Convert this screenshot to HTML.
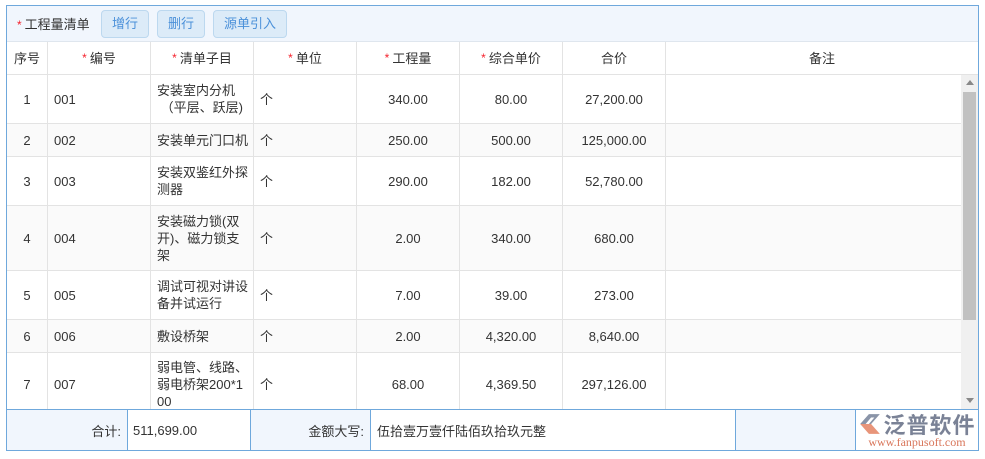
<!DOCTYPE html>
<html><head><meta charset="utf-8"><style>
*{box-sizing:border-box;margin:0;padding:0}
body{width:985px;height:459px;background:#fff;font-family:"Liberation Sans","Noto Sans CJK SC",sans-serif;font-size:13px;color:#333;position:relative;overflow:hidden}
.a{position:absolute}
.st{color:#f5222d;font-size:12px;margin-right:3px}
.btn{position:absolute;top:10px;height:28px;border:1px solid #bcd8ef;background:#dcebf8;border-radius:4px;color:#4a90d9;font-size:13px;line-height:26px;text-align:center}
.c{position:absolute;display:flex;align-items:center;border-right:1px solid #e3e3e3;border-bottom:1px solid #e3e3e3;line-height:17px;overflow:hidden}
.ctr{justify-content:center;text-align:center}
.lft{padding-left:6px}
.f{position:absolute;top:410px;height:40px;border-right:1px solid #6fa8dc;display:flex;align-items:center}
</style></head><body>
<div class="a" style="left:6px;top:5px;width:973px;height:446px;border:1px solid #6fa8dc"></div>
<div class="a" style="left:7px;top:6px;width:971px;height:36px;background:#f1f6fd;border-bottom:1px solid #dfe6ee"></div>
<div class="a" style="left:17px;top:15px;line-height:20px;font-size:13px"><span class="st">*</span>工程量清单</div>
<div class="btn" style="left:101px;width:48px">增行</div>
<div class="btn" style="left:157px;width:48px">删行</div>
<div class="btn" style="left:213px;width:74px">源单引入</div>

<div class="c ctr" style="left:7px;top:42px;width:41px;height:33px;align-items:flex-start;padding-top:8px">序号</div>
<div class="c ctr" style="left:48px;top:42px;width:103px;height:33px;align-items:flex-start;padding-top:8px"><span class="st">*</span>编号</div>
<div class="c ctr" style="left:151px;top:42px;width:103px;height:33px;align-items:flex-start;padding-top:8px"><span class="st">*</span>清单子目</div>
<div class="c ctr" style="left:254px;top:42px;width:103px;height:33px;align-items:flex-start;padding-top:8px"><span class="st">*</span>单位</div>
<div class="c ctr" style="left:357px;top:42px;width:103px;height:33px;align-items:flex-start;padding-top:8px"><span class="st">*</span>工程量</div>
<div class="c ctr" style="left:460px;top:42px;width:103px;height:33px;align-items:flex-start;padding-top:8px"><span class="st">*</span>综合单价</div>
<div class="c ctr" style="left:563px;top:42px;width:103px;height:33px;align-items:flex-start;padding-top:8px">合价</div>
<div class="c ctr" style="left:666px;top:42px;width:312px;height:33px;align-items:flex-start;padding-top:8px;border-right:none">备注</div>

<div id="rows"></div>
<script>
var rows=[
[75,49,"1","001","安装室内分机<br>&nbsp;（平层、跃层)","340.00","80.00","27,200.00",0],
[124,33,"2","002","安装单元门口机","250.00","500.00","125,000.00",1],
[157,49,"3","003","安装双鉴红外探<br>测器","290.00","182.00","52,780.00",0],
[206,65,"4","004","安装磁力锁(双<br>开)、磁力锁支<br>架","2.00","340.00","680.00",1],
[271,49,"5","005","调试可视对讲设<br>备并试运行","7.00","39.00","273.00",0],
[320,33,"6","006","敷设桥架","2.00","4,320.00","8,640.00",1],
[353,63,"7","007","弱电管、线路、<br>弱电桥架200*1<br>00","68.00","4,369.50","297,126.00",0]];
var h="";
rows.forEach(function(r){
var t=r[0],hh=r[1],bg=r[8]?"#fafafa":"#fff";
var s="top:"+t+"px;height:"+hh+"px;background:"+bg+";";
if(t+hh>410){s="top:"+t+"px;height:"+hh+"px;background:"+bg+";border-bottom:none;";}
h+='<div class="c ctr" style="left:7px;width:41px;'+s+'">'+r[2]+'</div>';
h+='<div class="c lft" style="left:48px;width:103px;'+s+'">'+r[3]+'</div>';
h+='<div class="c lft" style="left:151px;width:103px;'+s+'">'+r[4]+'</div>';
h+='<div class="c lft" style="left:254px;width:103px;'+s+'">个</div>';
h+='<div class="c ctr" style="left:357px;width:103px;'+s+'">'+r[5]+'</div>';
h+='<div class="c ctr" style="left:460px;width:103px;'+s+'">'+r[6]+'</div>';
h+='<div class="c ctr" style="left:563px;width:103px;'+s+'">'+r[7]+'</div>';
h+='<div class="c" style="left:666px;width:296px;'+s+'"></div>';
});
document.getElementById("rows").innerHTML=h;
</script>
<div class="a" style="left:961px;top:75px;width:17px;height:335px;background:#f0f0f0"></div>
<div class="a" style="left:963px;top:92px;width:13px;height:228px;background:#c1c1c1"></div>
<div class="a" style="left:966px;top:80px;width:0;height:0;border-left:4px solid transparent;border-right:4px solid transparent;border-bottom:5px solid #888"></div>
<div class="a" style="left:966px;top:398px;width:0;height:0;border-left:4px solid transparent;border-right:4px solid transparent;border-top:5px solid #888"></div>

<div class="a" style="left:0;top:409px;width:985px;height:50px;background:#fff"></div>
<div class="a" style="left:6px;top:409px;width:973px;height:42px;border:1px solid #6fa8dc;border-top:1px solid #6fa8dc"></div>
<div class="f" style="left:7px;width:121px;background:#f1f6fd;justify-content:flex-end;padding-right:6px">合计:</div>
<div class="f" style="left:128px;width:123px;padding-left:5px">511,699.00</div>
<div class="f" style="left:251px;width:120px;background:#f1f6fd;justify-content:flex-end;padding-right:6px">金额大写:</div>
<div class="f" style="left:371px;width:365px;padding-left:6px">伍拾壹万壹仟陆佰玖拾玖元整</div>
<div class="f" style="left:736px;width:120px;background:#f1f6fd"></div>
<div class="f" style="left:856px;width:122px;border-right:none;flex-direction:column;align-items:center;justify-content:center">
<div style="display:flex;align-items:center;height:24px">
<svg width="24" height="22" viewBox="0 0 22 20"><path d="M2 10 L10 1 L20 1 L12 10 Z" fill="#8a94a8"/><path d="M2 10 L12 10 L20 19 L10 19 Z" fill="#e8957a"/><path d="M7 10 L12 4 L15 4 L10 10 Z" fill="#fff"/></svg>
<span style="font-size:22px;color:#7a8296;letter-spacing:1px;margin-left:1px;font-weight:bold">泛普软件</span></div>
<div style="font-family:'Liberation Serif',serif;font-size:12px;color:#d9765a;line-height:12px">www.fanpusoft.com</div>
</div>
</body></html>
